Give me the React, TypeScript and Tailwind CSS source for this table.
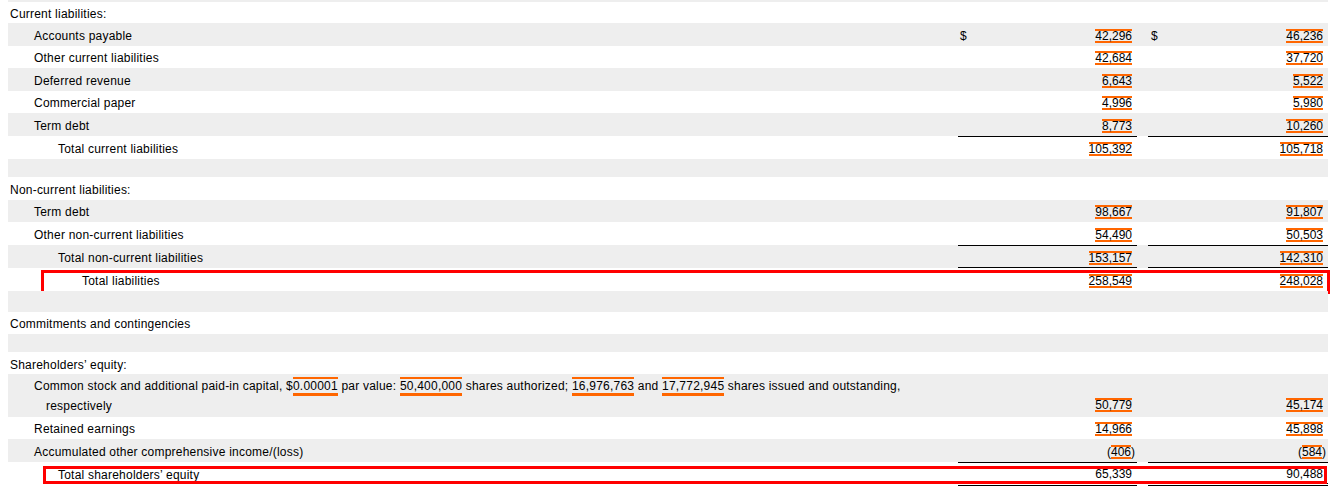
type Row = {
  label?: React.ReactNode;
  level?: number;
  h: number;
  gray?: boolean;
  a?: string;
  b?: string;
  dollar?: boolean;
  lineTop?: boolean;
  lineBottom?: boolean;
  doubleBottom?: boolean;
  plain?: boolean;
  box?: 'liab' | 'equity';
  wrap?: boolean;
  low?: boolean;
};

const indent = ['pl-[2px]', 'pl-[26px]', 'pl-[50px]', 'pl-[74px]'];

const Hl = ({ children }: { children: React.ReactNode }) => (
  <span className="inline-block leading-[14px] border-t-2 border-b-[3px] border-[#ff6600] [text-indent:0]">{children}</span>
);

const commonStock = (
  <>
    Common stock and additional paid-in capital, $<Hl>0.00001</Hl> par value: <Hl>50,400,000</Hl> shares authorized;{' '}
    <Hl>16,976,763</Hl> and <Hl>17,772,945</Hl> shares issued and outstanding, respectively
  </>
);

const rows: Row[] = [
  { h: 2, gray: true },
  { label: 'Current liabilities:', level: 0, h: 21 },
  { label: 'Accounts payable', level: 1, h: 23, gray: true, a: '42,296', b: '46,236', dollar: true },
  { label: 'Other current liabilities', level: 1, h: 22, a: '42,684', b: '37,720' },
  { label: 'Deferred revenue', level: 1, h: 23, gray: true, a: '6,643', b: '5,522' },
  { label: 'Commercial paper', level: 1, h: 22, a: '4,996', b: '5,980' },
  { label: 'Term debt', level: 1, h: 23, gray: true, a: '8,773', b: '10,260' },
  { label: 'Total current liabilities', level: 2, h: 23, a: '105,392', b: '105,718', lineTop: true },
  { h: 18, gray: true },
  { label: 'Non-current liabilities:', level: 0, h: 23 },
  { label: 'Term debt', level: 1, h: 22, gray: true, a: '98,667', b: '91,807' },
  { label: 'Other non-current liabilities', level: 1, h: 23, a: '54,490', b: '50,503' },
  { label: 'Total non-current liabilities', level: 2, h: 23, gray: true, a: '153,157', b: '142,310', lineTop: true, lineBottom: true },
  { label: 'Total liabilities', level: 3, h: 23, a: '258,549', b: '248,028', box: 'liab' },
  { h: 21, gray: true },
  { label: 'Commitments and contingencies', level: 0, h: 22 },
  { h: 18, gray: true },
  { label: 'Shareholders’ equity:', level: 0, h: 22, low: true },
  { label: commonStock, h: 43, gray: true, a: '50,779', b: '45,174', wrap: true },
  { label: 'Retained earnings', level: 1, h: 22, a: '14,966', b: '45,898' },
  { label: 'Accumulated other comprehensive income/(loss)', level: 1, h: 23, gray: true, a: '(406)', b: '(584)' },
  { label: 'Total shareholders’ equity', level: 2, h: 23, a: '65,339', b: '90,488', lineTop: true, doubleBottom: true, plain: true, box: 'equity' },
];

const Num = ({ v, plain }: { v: string; plain?: boolean }) => {
  const neg = v.startsWith('(');
  const digits = neg ? v.slice(1, -1) : v;
  const mark = plain ? 'border-transparent' : 'border-[#ff6600]';
  return (
    <span className="whitespace-nowrap">
      {neg && '('}
      <span className={`inline-block leading-[10px] border-y-2 ${mark}`}>{digits}</span>
      {neg && <span className="mr-[-3px]">)</span>}
    </span>
  );
};

const Cell = ({ r, v, first }: { r: Row; v?: string; first: boolean }) => (
  <div
    className={[
      'flex justify-between',
      first ? 'pl-[2px]' : 'pl-[3px]',
      'pr-[5px]',
      r.wrap ? 'items-end pb-[3px]' : 'items-center pt-[2px]',
      r.lineTop ? 'border-t border-black' : '',
      r.lineBottom ? 'border-b border-black' : '',
      r.doubleBottom ? 'border-b-[3px] border-double border-black' : '',
    ].join(' ')}
  >
    <span>{r.dollar ? '$' : ''}</span>
    {v && <Num v={v} plain={r.plain} />}
  </div>
);

export default function App() {
  return (
    <div className="min-h-screen bg-white pl-2 pr-[11px] font-['Liberation_Sans',Arial,sans-serif] text-[12px] text-black">
      {rows.map((r, i) => (
        <div
          key={i}
          className={`relative grid grid-cols-[950px_179px_11px_180px] ${r.gray ? 'bg-[#eeeeee]' : 'bg-white'}`}
          style={{ height: r.h }}
        >
          {r.wrap ? (
            <div className="pl-[38px] pr-[50px] pt-[2px] leading-[20px] tracking-[0.22px] [text-indent:-12px]">{r.label}</div>
          ) : (
            <div className={`flex items-center tracking-[0.22px] ${r.low ? 'pt-[4px]' : 'pt-[2px]'} ${indent[r.level ?? 0]}`}>
              {r.label}
            </div>
          )}
          {r.label !== undefined || r.a ? (
            <>
              <Cell r={r} v={r.a} first />
              <div />
              <Cell r={r} v={r.b} first={false} />
            </>
          ) : null}
          {r.box === 'liab' && (
            <div className="pointer-events-none absolute left-[33px] right-[-2px] top-[2px] bottom-[-3px] border-[3px] border-[#ff0000]" />
          )}
          {r.box === 'equity' && (
            <div className="pointer-events-none absolute left-[35px] right-[1px] top-[4px] bottom-[1px] border-[3px] border-[#ff0000]" />
          )}
        </div>
      ))}
    </div>
  );
}
